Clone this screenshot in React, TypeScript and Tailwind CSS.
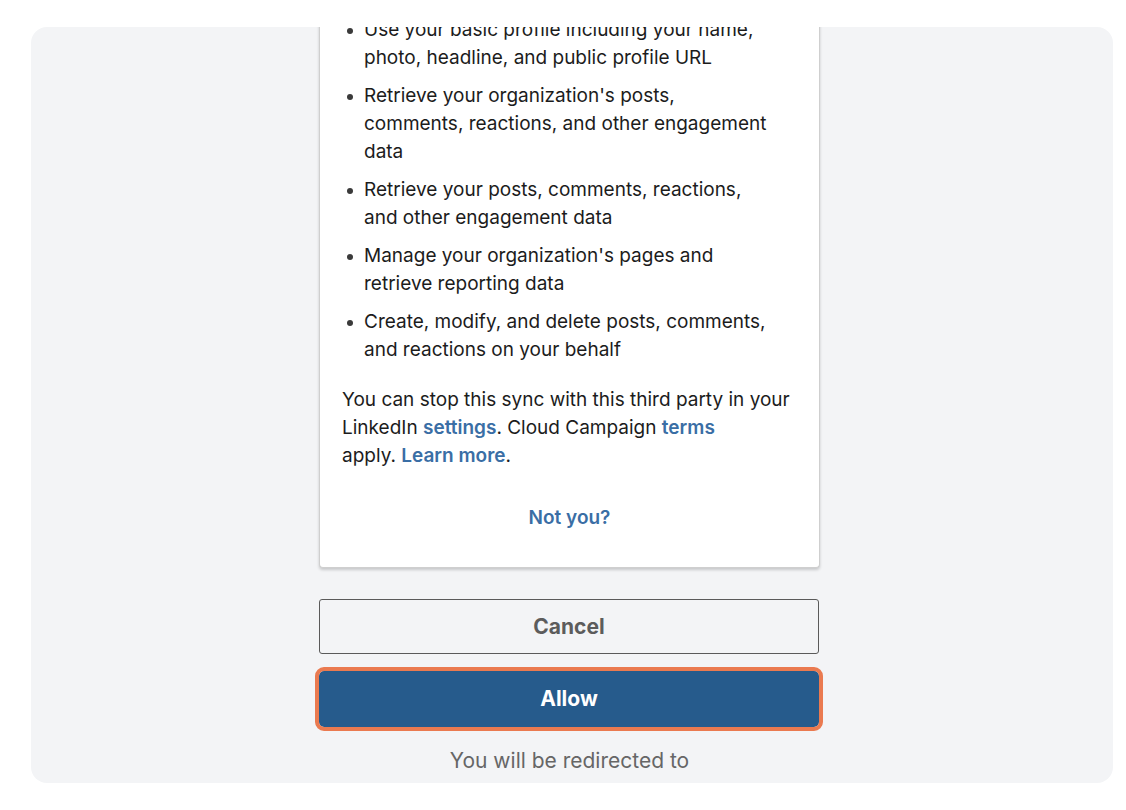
const font = { fontFamily: 'Inter, "Noto Sans", sans-serif' }

function Bullet({ children }: { children: React.ReactNode }) {
  return (
    <li className="flex">
      <span className="w-[22px] shrink-0 pl-[5px] pt-[12px]">
        <span className="block h-[6px] w-[6px] rounded-full bg-[#3a3a3a]" />
      </span>
      <span className="w-[408px]">{children}</span>
    </li>
  )
}

function A({ children }: { children: React.ReactNode }) {
  return <a className="font-semibold text-[#3a6ea5]">{children}</a>
}

export default function App() {
  return (
    <div className="h-[810px] w-[1126px] bg-white pt-[27px] pl-[31px]" style={font}>
      <div className="h-[756px] w-[1082px] overflow-hidden rounded-2xl bg-[#f3f4f6]">
        <div className="mt-[3px] ml-[288px] w-[501px]">
          <div className="rounded-b-[4px] border-x border-b border-[#cfcfcf] bg-white px-[22px] pb-[35px] shadow-[0_2px_3px_rgba(0,0,0,0.18)]">
            <ul className="-mt-[14px] flex flex-col gap-[10px] text-[19px] leading-[28px] text-[#1c1c1c]">
              <Bullet>Use your basic profile including your name, photo, headline, and public profile URL</Bullet>
              <Bullet>Retrieve your organization's posts, comments, reactions, and other engagement data</Bullet>
              <Bullet>Retrieve your posts, comments, reactions, and other engagement data</Bullet>
              <Bullet>Manage your organization's pages and retrieve reporting data</Bullet>
              <Bullet>Create, modify, and delete posts, comments, and reactions on your behalf</Bullet>
            </ul>
            <p className="mt-[22px] w-[452px] text-[19px] leading-[28px] text-[#1c1c1c]">
              You can stop this sync with this third party in your LinkedIn <A>settings</A>. Cloud Campaign <A>terms</A>
              <br />
              apply. <A>Learn more</A>.
            </p>
            <div className="mt-[34px] text-center text-[19px] leading-[28px] font-semibold text-[#3a6ea5]">Not you?</div>
          </div>
          <div className="mt-[31px] flex flex-col gap-[17px]">
            <button className="h-[55px] w-[500px] rounded-[3px] border border-[#5a5a5a] bg-[#f3f4f6] text-[21px] font-bold text-[#5c5c5c]">
              Cancel
            </button>
            <button className="h-[56px] w-[500px] rounded-[5px] bg-[#265b8c] text-[21px] font-bold text-white outline-4 outline-[#ea7a50]">
              Allow
            </button>
          </div>
          <div className="mt-[20px] text-center text-[21px] leading-[28px] text-[#666666]">You will be redirected to</div>
        </div>
      </div>
    </div>
  )
}
